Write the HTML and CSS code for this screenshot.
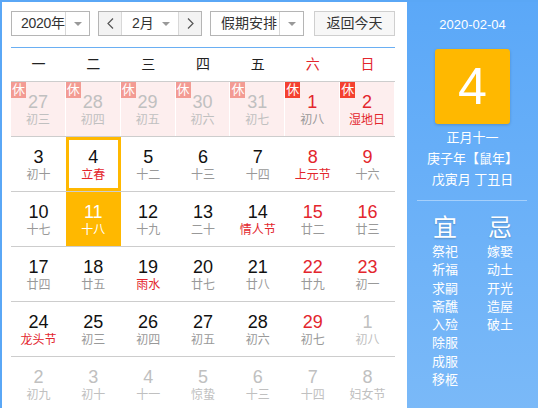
FILE: index.html
```html
<!DOCTYPE html>
<html lang="zh-CN">
<head>
<meta charset="utf-8">
<title>万年历</title>
<link rel="stylesheet" href="styles.css">
</head>
<body>
<div class="widget">
  <div class="main">
    <div class="toolbar">
      <div class="select year">
        <span class="sel-text">2020年</span>
        <span class="sel-arrow"><svg width="8" height="4" viewBox="0 0 8 4"><path d="M0 0H8L4 4Z" fill="#999"/></svg></span>
      </div>
      <div class="month-group">
        <span class="nav-btn"><svg width="7" height="11" viewBox="0 0 7 11"><path d="M6 0.5L1 5.5L6 10.5" fill="none" stroke="#555" stroke-width="1.2"/></svg></span>
        <span class="month-sel">
          <span class="sel-text">2月</span>
          <svg width="8" height="4" viewBox="0 0 8 4"><path d="M0 0H8L4 4Z" fill="#999"/></svg>
        </span>
        <span class="nav-btn"><svg width="7" height="11" viewBox="0 0 7 11"><path d="M1 0.5L6 5.5L1 10.5" fill="none" stroke="#555" stroke-width="1.2"/></svg></span>
      </div>
      <div class="select holiday">
        <span class="sel-text">假期安排</span>
        <span class="sel-arrow"><svg width="8" height="4" viewBox="0 0 8 4"><path d="M0 0H8L4 4Z" fill="#999"/></svg></span>
      </div>
      <div class="today-btn">返回今天</div>
    </div>

    <div class="calendar">
      <div class="weekhead">
        <span>一</span><span>二</span><span>三</span><span>四</span><span>五</span><span class="red">六</span><span class="red">日</span>
      </div>

      <div class="week">
        <div class="day rest other"><i class="badge">休</i><b>27</b><em>初三</em></div>
        <div class="day rest other"><i class="badge">休</i><b>28</b><em>初四</em></div>
        <div class="day rest other"><i class="badge">休</i><b>29</b><em>初五</em></div>
        <div class="day rest other"><i class="badge">休</i><b>30</b><em>初六</em></div>
        <div class="day rest other"><i class="badge">休</i><b>31</b><em>初七</em></div>
        <div class="day rest weekend"><i class="badge">休</i><b>1</b><em>初八</em></div>
        <div class="day rest weekend"><i class="badge">休</i><b>2</b><em class="fest">湿地日</em></div>
      </div>

      <div class="week">
        <div class="day"><b>3</b><em>初十</em></div>
        <div class="day today"><b>4</b><em class="fest">立春</em></div>
        <div class="day"><b>5</b><em>十二</em></div>
        <div class="day"><b>6</b><em>十三</em></div>
        <div class="day"><b>7</b><em>十四</em></div>
        <div class="day weekend"><b>8</b><em class="fest">上元节</em></div>
        <div class="day weekend"><b>9</b><em>十六</em></div>
      </div>

      <div class="week">
        <div class="day"><b>10</b><em>十七</em></div>
        <div class="day selected"><b>11</b><em>十八</em></div>
        <div class="day"><b>12</b><em>十九</em></div>
        <div class="day"><b>13</b><em>二十</em></div>
        <div class="day"><b>14</b><em class="fest">情人节</em></div>
        <div class="day weekend"><b>15</b><em>廿二</em></div>
        <div class="day weekend"><b>16</b><em>廿三</em></div>
      </div>

      <div class="week">
        <div class="day"><b>17</b><em>廿四</em></div>
        <div class="day"><b>18</b><em>廿五</em></div>
        <div class="day"><b>19</b><em class="fest">雨水</em></div>
        <div class="day"><b>20</b><em>廿七</em></div>
        <div class="day"><b>21</b><em>廿八</em></div>
        <div class="day weekend"><b>22</b><em>廿九</em></div>
        <div class="day weekend"><b>23</b><em>初一</em></div>
      </div>

      <div class="week">
        <div class="day"><b>24</b><em class="fest">龙头节</em></div>
        <div class="day"><b>25</b><em>初三</em></div>
        <div class="day"><b>26</b><em>初四</em></div>
        <div class="day"><b>27</b><em>初五</em></div>
        <div class="day"><b>28</b><em>初六</em></div>
        <div class="day weekend"><b>29</b><em>初七</em></div>
        <div class="day other"><b>1</b><em>初八</em></div>
      </div>

      <div class="week last">
        <div class="day other"><b>2</b><em>初九</em></div>
        <div class="day other"><b>3</b><em>初十</em></div>
        <div class="day other"><b>4</b><em>十一</em></div>
        <div class="day other"><b>5</b><em>惊蛰</em></div>
        <div class="day other"><b>6</b><em>十三</em></div>
        <div class="day other"><b>7</b><em>十四</em></div>
        <div class="day other"><b>8</b><em>妇女节</em></div>
      </div>
    </div>
  </div>

  <div class="side">
    <div class="side-date">2020-02-04</div>
    <div class="big-day">4</div>
    <div class="lunar">
      <div>正月十一</div>
      <div>庚子年【鼠年】</div>
      <div>戊寅月 丁丑日</div>
    </div>
    <div class="divider"></div>
    <div class="yiji">
      <div class="col">
        <div class="yj-title">宜</div>
        <div class="yj-item">祭祀</div>
        <div class="yj-item">祈福</div>
        <div class="yj-item">求嗣</div>
        <div class="yj-item">斋醮</div>
        <div class="yj-item">入殓</div>
        <div class="yj-item">除服</div>
        <div class="yj-item">成服</div>
        <div class="yj-item">移柩</div>
      </div>
      <div class="col">
        <div class="yj-title">忌</div>
        <div class="yj-item">嫁娶</div>
        <div class="yj-item">动土</div>
        <div class="yj-item">开光</div>
        <div class="yj-item">造屋</div>
        <div class="yj-item">破土</div>
      </div>
    </div>
  </div>
</div>
</body>
</html>
```

FILE: styles.css
```css
* { box-sizing: border-box; }

html, body {
  margin: 0;
  padding: 0;
  background: #fff;
}

body {
  font-family: "Liberation Sans", "Noto Sans CJK SC", sans-serif;
  color: #333;
}

.widget {
  display: flex;
  width: 538px;
  height: 408px;
  overflow: hidden;
  border-top: 2px solid #5aa7f6;
  border-left: 2px solid #5aa7f6;
}

.main {
  width: 405px;
  flex: none;
  padding: 9px 12px 0 9px;
  background: #fff;
}

/* toolbar */
.toolbar {
  display: flex;
  height: 25px;
  font-size: 14px;
  line-height: 23px;
  color: #333;
  white-space: nowrap;
}

.select {
  display: flex;
  height: 25px;
  border: 1px solid #b5b5b5;
  background: #fff;
}

.year { width: 79px; }
.holiday { width: 94px; margin-left: 8px; }

.select .sel-text {
  flex: 1;
  min-width: 0;
  padding-left: 9px;
  white-space: nowrap;
  letter-spacing: -0.3px;
}

.holiday .sel-text {
  padding-left: 10px;
  letter-spacing: 0;
}

.sel-arrow {
  width: 24px;
  flex: none;
  border-left: 1px solid #d8d8d8;
  display: flex;
  align-items: center;
  justify-content: center;
}

.month-group {
  display: flex;
  width: 104px;
  height: 25px;
  margin-left: 8px;
  border: 1px solid #b5b5b5;
}

.nav-btn {
  width: 22px;
  flex: none;
  display: flex;
  align-items: center;
  justify-content: center;
  background: #f3f3f3;
}

.month-sel {
  flex: 1;
  display: flex;
  align-items: center;
  padding: 0 8px 0 10px;
  background: #fff;
  border-left: 1px solid #d8d8d8;
  border-right: 1px solid #d8d8d8;
}

.month-sel .sel-text { flex: 1; }

.today-btn {
  width: 81px;
  height: 25px;
  margin-left: 10px;
  border: 1px solid #cfcfcf;
  background: #f7f7f7;
  text-align: center;
}

/* calendar */
.calendar {
  margin-top: 11px;
  border-top: 1px solid #6aaff3;
}

.weekhead {
  display: grid;
  grid-template-columns: repeat(7, 1fr);
  height: 34px;
  border-bottom: 1px solid #cdcdcd;
  font-size: 14px;
  line-height: 33px;
  text-align: center;
  color: #222;
}

.weekhead .red { color: #e3262d; }

.week {
  display: grid;
  grid-template-columns: repeat(7, 1fr);
  height: 55px;
  border-bottom: 1px solid #cdcdcd;
}

.week.last { border-bottom: none; }

.day {
  position: relative;
  display: flex;
  flex-direction: column;
  align-items: center;
  padding-top: 9px;
  text-align: center;
}

.day b {
  font-weight: normal;
  font-size: 18px;
  line-height: 22px;
  color: #111;
}

.day em {
  font-style: normal;
  font-size: 12px;
  line-height: 14px;
  color: #999;
}

.day.weekend b { color: #e3262d; }
.day em.fest { color: #e3262d; }

.day.other b,
.day.other em { color: #c0c0c0; }

.day.rest {
  background: #fdeeee;
  border-right: 1px solid #fff;
}

.badge {
  position: absolute;
  left: 0;
  top: 0;
  width: 15px;
  height: 16px;
  font-style: normal;
  font-size: 13px;
  line-height: 16px;
  color: #fff;
  text-align: center;
  background: #f4412f;
}

.day.other .badge { background: #f39b93; }

.day.today {
  box-shadow: inset 0 0 0 3px #ffb800;
}

.day.selected {
  background: #ffb800;
}

.day.selected b,
.day.selected em { color: #fff; }

/* side panel */
.side {
  width: 131px;
  flex: none;
  background: linear-gradient(180deg, #5ba8f8 0%, #7ab9f8 100%);
  color: #fff;
  display: flex;
  flex-direction: column;
  align-items: center;
  padding-top: 13px;
}

.side-date {
  font-size: 13px;
  line-height: 20px;
}

.big-day {
  width: 75px;
  height: 75px;
  margin-top: 14px;
  border-radius: 3px;
  background: #ffb800;
  box-shadow: 0 1px 3px rgba(0, 0, 0, 0.18);
  font-size: 52px;
  line-height: 75px;
  text-align: center;
  color: #fff;
}

.lunar {
  margin-top: 3px;
  font-size: 13px;
  line-height: 21px;
  text-align: center;
}

.divider {
  align-self: flex-start;
  width: 110px;
  height: 1px;
  margin: 10px 0 0 10px;
  background: rgba(255, 255, 255, 0.4);
}

.yiji {
  align-self: flex-start;
  display: flex;
  gap: 29px;
  margin: 12px 0 0 25px;
}

.col {
  width: 26px;
  display: flex;
  flex-direction: column;
  align-items: center;
}

.yj-title {
  font-size: 24px;
  line-height: 30px;
  text-shadow: 0 1px 2px rgba(0, 0, 0, 0.2);
}

.yj-item {
  font-size: 13px;
  line-height: 18.3px;
  white-space: nowrap;
}
```
